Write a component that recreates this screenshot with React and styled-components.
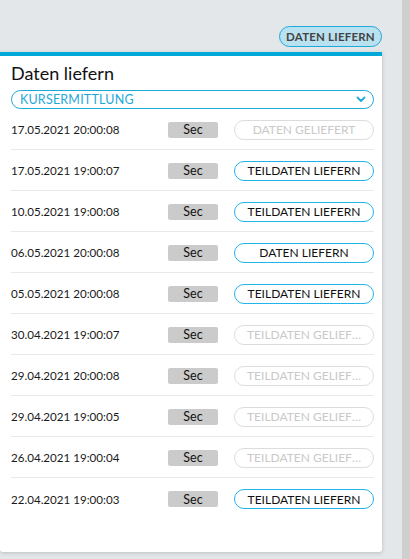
import React from "react";
import styled, { createGlobalStyle } from "styled-components";

const GlobalStyle = createGlobalStyle`
  html, body { margin: 0; padding: 0; }
  body {
    background: linear-gradient(to right, #e4e7ea 402px, #cfcfcf 402px);
    font-family: Lato, "Open Sans", "Liberation Sans", sans-serif;
    color: #1a1a1a;
  }
`;

const Page = styled.div`
  width: 410px;
  height: 559px;
  overflow: hidden;
  display: flex;
  flex-direction: column;
`;

const Column = styled.div`
  width: 382px;
  display: flex;
  flex-direction: column;
`;

const TopBar = styled.div`
  display: flex;
  justify-content: flex-end;
  padding-top: 26px;
  height: 21px;
`;

const TopButton = styled.button`
  box-sizing: border-box;
  height: 21px;
  width: 103px;
  padding: 0;
  border: 1px solid #1fa9d9;
  border-radius: 11px;
  background: #b9e1f0;
  color: #444;
  font-family: inherit;
  font-size: 11.5px;
  font-weight: 700;
  letter-spacing: 0.2px;
`;

const Popup = styled.div`
  margin-top: 5px;
  height: 500px;
  border-top: 4px solid #00a9d8;
  background: #fff;
  border-radius: 0 0 3px 3px;
  box-shadow: 0 1px 4px rgba(0, 0, 0, 0.18);
  padding: 6px 8px 0 11px;
  box-sizing: border-box;
  display: flex;
  flex-direction: column;
`;

const Title = styled.h2`
  margin: 0;
  font-size: 18px;
  font-weight: 400;
  line-height: 22px;
  color: #111;
`;

const Select = styled.div`
  margin-top: 6px;
  box-sizing: border-box;
  height: 19px;
  border: 1px solid #1fa9d9;
  border-radius: 10px;
  display: flex;
  align-items: center;
  justify-content: space-between;
  padding: 0 7px 0 8px;
  color: #1fa9d9;
  font-size: 12.5px;
  letter-spacing: 0.2px;
`;

const Row = styled.div`
  height: 41px;
  box-sizing: border-box;
  display: grid;
  grid-template-columns: 157px 50px 1fr;
  justify-items: start;
  align-items: center;
  border-bottom: ${(p) => (p.$last ? "none" : "1px solid #e9e9e9")};
  padding-top: 1px;
`;

const DateText = styled.span`
  font-size: 11.6px;
  color: #1a1a1a;
  white-space: nowrap;
`;

const Badge = styled.span`
  width: 50px;
  height: 16px;
  background: #cbcbcb;
  border-radius: 2px;
  display: flex;
  align-items: center;
  justify-content: center;
  font-size: 12.5px;
  color: #111;
`;

const Action = styled.button`
  justify-self: end;
  box-sizing: border-box;
  height: 20px;
  width: 140px;
  padding: 0 12px;
  border-radius: 10px;
  border: 1px solid ${(p) => (p.disabled ? "#dcdcdc" : "#1fb5ea")};
  background: #fff;
  color: ${(p) => (p.disabled ? "#c9c9c9" : "#111")};
  font-family: inherit;
  font-size: 12px;
  white-space: nowrap;
  overflow: hidden;
  text-overflow: ellipsis;
  text-transform: uppercase;
`;

const rows = [
  ["17.05.2021 20:00:08", "Daten geliefert", true],
  ["17.05.2021 19:00:07", "Teildaten liefern", false],
  ["10.05.2021 19:00:08", "Teildaten liefern", false],
  ["06.05.2021 20:00:08", "Daten liefern", false],
  ["05.05.2021 20:00:08", "Teildaten liefern", false],
  ["30.04.2021 19:00:07", "Teildaten geliefert", true],
  ["29.04.2021 20:00:08", "Teildaten geliefert", true],
  ["29.04.2021 19:00:05", "Teildaten geliefert", true],
  ["26.04.2021 19:00:04", "Teildaten geliefert", true],
  ["22.04.2021 19:00:03", "Teildaten liefern", false],
];

const Chevron = () => (
  <svg width="10" height="7" viewBox="0 0 10 7">
    <path d="M1.5 1.5 L5 5 L8.5 1.5" fill="none" stroke="#1fa9d9" strokeWidth="1.8" strokeLinecap="round" strokeLinejoin="round" />
  </svg>
);

export default function App() {
  return (
    <Page>
      <GlobalStyle />
      <Column>
        <TopBar>
          <TopButton>DATEN LIEFERN</TopButton>
        </TopBar>
        <Popup>
          <Title>Daten liefern</Title>
          <Select>
            <span>KURSERMITTLUNG</span>
            <Chevron />
          </Select>
          {rows.map(([date, label, disabled], i) => (
            <Row key={i} $last={i === rows.length - 1}>
              <DateText>{date}</DateText>
              <Badge>Sec</Badge>
              <Action disabled={disabled}>{label}</Action>
            </Row>
          ))}
        </Popup>
      </Column>
    </Page>
  );
}
